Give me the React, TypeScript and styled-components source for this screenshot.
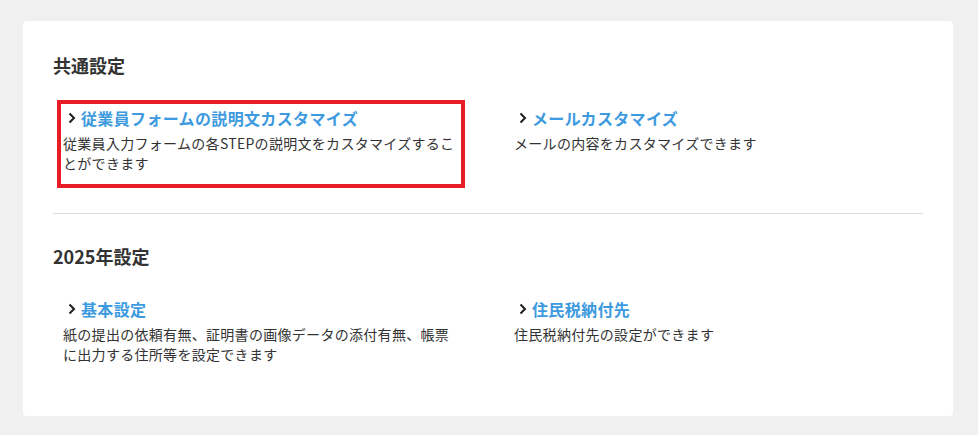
import React from "react";
import styled, { createGlobalStyle } from "styled-components";

type Item = {
  title: string;
  description: string;
  highlighted?: boolean;
};

type Section = {
  heading: string;
  items: Item[];
};

const sections: Section[] = [
  {
    heading: "共通設定",
    items: [
      {
        title: "従業員フォームの説明文カスタマイズ",
        description: "従業員入力フォームの各STEPの説明文をカスタマイズすることができます",
        highlighted: true,
      },
      {
        title: "メールカスタマイズ",
        description: "メールの内容をカスタマイズできます",
      },
    ],
  },
  {
    heading: "2025年設定",
    items: [
      {
        title: "基本設定",
        description: "紙の提出の依頼有無、証明書の画像データの添付有無、帳票に出力する住所等を設定できます",
      },
      {
        title: "住民税納付先",
        description: "住民税納付先の設定ができます",
      },
    ],
  },
];

const Chevron = () => (
  <ChevronIcon viewBox="0 0 8 12" width="8" height="12">
    <path d="M1.5 1.5 L6 6 L1.5 10.5" fill="none" stroke="#1e1e1e" strokeWidth="2" />
  </ChevronIcon>
);

const App: React.FC = () => {
  return (
    <>
      <GlobalStyle />
      <Page>
        <Card>
          {sections.map((section, i) => (
            <React.Fragment key={section.heading}>
              {i > 0 && <Divider />}
              <SectionBlock>
                <Heading>{section.heading}</Heading>
                <ItemGrid>
                  {section.items.map((item) => (
                    <SettingItem key={item.title} $highlighted={item.highlighted}>
                      <TitleRow>
                        <Chevron />
                        <TitleLink href="#">{item.title}</TitleLink>
                      </TitleRow>
                      <Description>{item.description}</Description>
                    </SettingItem>
                  ))}
                </ItemGrid>
              </SectionBlock>
            </React.Fragment>
          ))}
        </Card>
      </Page>
    </>
  );
};
export default App;

const GlobalStyle = createGlobalStyle`
  html, body {
    margin: 0;
    padding: 0;
    background: #f0f0f0;
  }
  body {
    font-family: "Noto Sans CJK JP", "Noto Sans", sans-serif;
    color: #333333;
  }
`;

const Page = styled.div`
  padding: 21px 25px 19px 23px;
`;

const Card = styled.div`
  background: #ffffff;
  border-radius: 4px;
  padding: 31px 30px 37px 30px;
`;

const SectionBlock = styled.section`
  display: flex;
  flex-direction: column;
  gap: 22px;
`;

const Heading = styled.h2`
  margin: 0;
  font-size: 18px;
  line-height: 26px;
  font-weight: 700;
  color: #333333;
`;

const ItemGrid = styled.div`
  display: grid;
  grid-template-columns: 451px 1fr;
`;

const SettingItem = styled.div<{ $highlighted?: boolean }>`
  width: 408px;
  box-sizing: border-box;
  margin-left: 4px;
  border: 4px solid ${(p) => (p.$highlighted ? "#e81c24" : "transparent")};
  padding: 2px 6px 11px 2px;
  display: flex;
  flex-direction: column;
  gap: 4px;
`;

const TitleRow = styled.div`
  display: flex;
  align-items: center;
  gap: 5px;
  padding-left: 5px;
`;

const ChevronIcon = styled.svg`
  flex-shrink: 0;
`;

const TitleLink = styled.a`
  font-size: 16px;
  line-height: 24px;
  font-weight: 700;
  letter-spacing: 0.35px;
  color: #3d9ade;
  text-decoration: none;
`;

const Description = styled.p`
  margin: 0;
  font-size: 14px;
  line-height: 19.5px;
  letter-spacing: 0.3px;
  color: #333333;
`;

const Divider = styled.hr`
  border: none;
  border-top: 1px solid #dcdcdc;
  margin: 25px 0 29px 0;
`;
